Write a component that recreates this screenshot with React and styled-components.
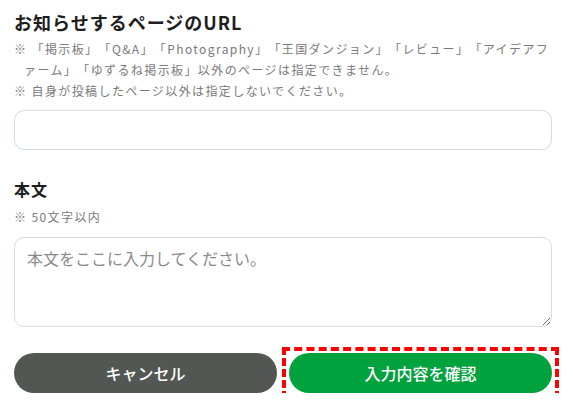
import React from 'react'
import styled, { createGlobalStyle } from 'styled-components'

const GlobalStyle = createGlobalStyle`
  body {
    margin: 0;
    background: #fff;
    font-family: 'Noto Sans CJK JP', 'Noto Sans', sans-serif;
    text-spacing-trim: space-all;
  }
`;

const Form = styled.div`
  display: flex;
  flex-direction: column;
  padding: 10px 21px 0 14px;
  width: 538px;
`;

const Heading = styled.h2`
  margin: 0;
  font-size: ${p => p.size || 18}px;
  letter-spacing: ${p => p.ls ?? 1}px;
  line-height: 24px;
  font-weight: 700;
  color: #1e1e1e;
`;

const NoteList = styled.div`
  margin-top: ${p => p.top || 0}px;
  font-size: 12px;
  letter-spacing: ${p => p.ls ?? 1.4}px;
  line-height: ${p => p.lh || 21}px;
  color: #7a7a7a;
`;

const Note = styled.p`
  margin: 0;
  padding-left: 10px;
  text-indent: -10px;
  white-space: nowrap;
`;

const TextInput = styled.input`
  box-sizing: border-box;
  margin-top: 9px;
  width: 100%;
  height: 40px;
  border: 1px solid #d4dbdb;
  border-radius: 10px;
  padding: 0 12px;
  font: inherit;
  font-size: 16px;
  outline: none;
`;

const TextArea = styled.textarea`
  box-sizing: border-box;
  margin-top: 10px;
  width: 100%;
  height: 90px;
  border: 1px solid #d4dbdb;
  border-radius: 10px;
  padding: 8px 12px;
  font-family: inherit;
  font-size: 16px;
  line-height: 24px;
  outline: none;
  &::placeholder {
    color: #8a8a8a;
  }
`;

const Buttons = styled.div`
  display: flex;
  gap: 12px;
  margin-top: 26px;
`;

const Button = styled.button`
  position: relative;
  flex: 1;
  height: 40px;
  border: none;
  border-radius: 20px;
  background: ${p => (p.primary ? '#00a23d' : '#525754')};
  color: #fff;
  font-family: inherit;
  font-size: 16px;
  font-weight: 500;
  cursor: pointer;
  ${p => p.highlight && `
    &::after {
      content: '';
      position: absolute;
      inset: -6px -7px;
      border: 4px dashed #ff0000;
      pointer-events: none;
    }
  `}
`;

export default function App() {
  return (
    <>
      <GlobalStyle />
      <Form>
        <Heading>お知らせするページのURL</Heading>
        <NoteList top={4}>
          <Note>
            ※ 「掲示板」「Q&A」「Photography」「王国ダンジョン」「レビュー」「アイデアフ
            <br />
            ァーム」「ゆずるね掲示板」以外のページは指定できません。
          </Note>
          <Note>※ 自身が投稿したページ以外は指定しないでください。</Note>
        </NoteList>
        <TextInput type="text" />

        <div style={{ height: 27 }} />
        <Heading size={16} ls={1}>本文</Heading>
        <NoteList top={6} lh={20}>
          <Note>※ 50文字以内</Note>
        </NoteList>
        <TextArea placeholder="本文をここに入力してください。" />

        <Buttons>
          <Button>キャンセル</Button>
          <Button primary highlight>入力内容を確認</Button>
        </Buttons>
      </Form>
    </>
  )
}
